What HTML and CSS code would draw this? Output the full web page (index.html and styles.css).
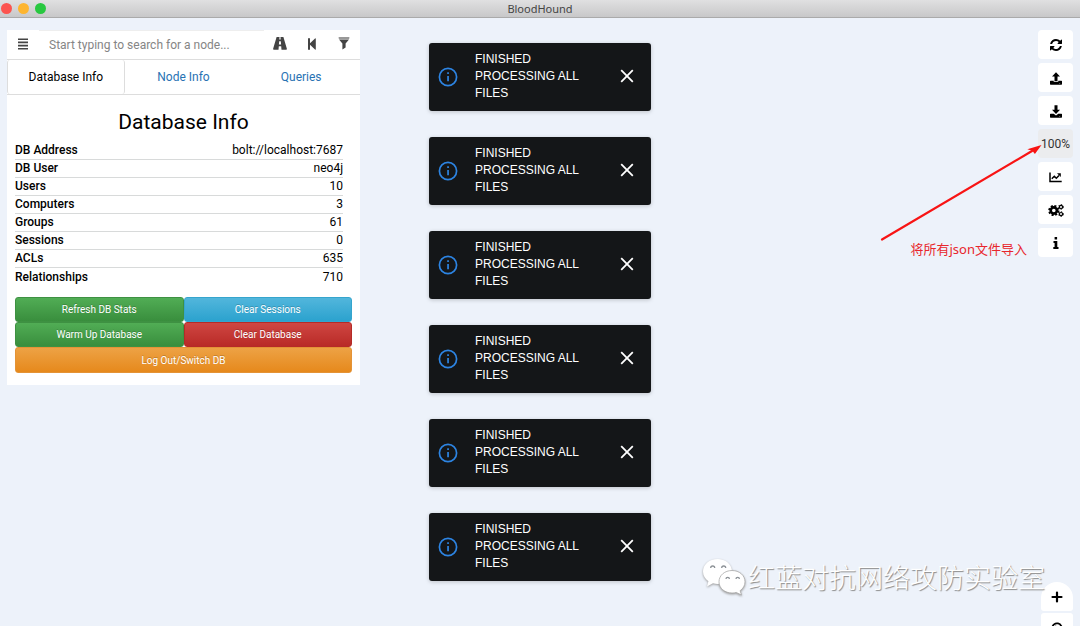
FILE: index.html
```html
<!DOCTYPE html>
<html lang="en">
<head>
<meta charset="utf-8">
<title>BloodHound</title>
<link rel="stylesheet" href="styles.css">
</head>
<body>
<header class="titlebar">
  <span class="lights"><i class="light close"></i><i class="light minimise"></i><i class="light expand"></i></span>
  <h1 class="app-name">BloodHound</h1>
</header>
<main class="workspace">
  <section class="panel">
    <form class="search">
      <button type="button" class="search-btn" aria-label="Menu"><svg width="12" height="12" viewBox="0 0 12 12"><path d="M1 1.200h10M1 4.400h10M1 7.600h10M1 10.800h10" stroke="currentColor" stroke-width="1.600"/></svg></button>
      <input class="search-input" type="text" aria-label="Search for a node" placeholder="Start typing to search for a node...">
      <button type="button" class="search-btn" aria-label="Pathfinding"><svg width="14" height="13" viewBox="0 0 14 13"><path fill="currentColor" fill-rule="evenodd" d="M3.600 0h2.900l-.2 2.500h1.400L7.500 0h2.900l3.400 11.600q.3 1.100-.6 1.100H8.500l-.3-3.400H5.800l-.3 3.400H.8q-.9 0-.6-1.100zM6.200 4.200 5.900 7.600h2.200l-.3-3.400z"/></svg></button>
      <button type="button" class="search-btn" aria-label="Back"><svg width="10" height="12" viewBox="0 0 10 12"><path fill="currentColor" d="M1 .3h2v5l5-4.800q.8-.6.8.4v10.200q0 1-.8.4L3 6.700v5H1z"/></svg></button>
      <button type="button" class="search-btn" aria-label="Filter"><svg width="12" height="13" viewBox="0 0 12 13"><path fill="currentColor" opacity=".55" d="M1 0h10q.8.500.4 1.300L11 2H1L.6 1.300Q.2.500 1 0z"/><path fill="currentColor" d="M1 2.600h10L7.600 6.500v4L4.400 12.500v-6z"/></svg></button>
    </form>
    <nav class="tabs">
      <button type="button" class="tab active">Database Info</button>
      <button type="button" class="tab">Node Info</button>
      <button type="button" class="tab">Queries</button>
    </nav>
    <div class="panel-body">
      <h2 class="panel-title">Database Info</h2>
      <table class="stats">
        <tbody>
          <tr><th scope="row">DB Address</th><td>bolt://localhost:7687</td></tr>
          <tr><th scope="row">DB User</th><td>neo4j</td></tr>
          <tr><th scope="row">Users</th><td>10</td></tr>
          <tr><th scope="row">Computers</th><td>3</td></tr>
          <tr><th scope="row">Groups</th><td>61</td></tr>
          <tr><th scope="row">Sessions</th><td>0</td></tr>
          <tr><th scope="row">ACLs</th><td>635</td></tr>
          <tr><th scope="row">Relationships</th><td>710</td></tr>
        </tbody>
      </table>
      <div class="actions">
        <button type="button" class="action green">Refresh DB Stats</button>
        <button type="button" class="action blue">Clear Sessions</button>
        <button type="button" class="action green">Warm Up Database</button>
        <button type="button" class="action red">Clear Database</button>
        <button type="button" class="action orange">Log Out/Switch DB</button>
      </div>
    </div>
  </section>

  <aside class="tools">
    <button type="button" class="tool" aria-label="Refresh"><svg width="12" height="12" viewBox="0 0 1536 1536"><path fill="currentColor" d="M1511 928q0 5-1 7-64 268-268 434.500T764 1536q-146 0-282.500-55T238 1324l-129 129q-19 19-45 19t-45-19-19-45V960q0-26 19-45t45-19h448q26 0 45 19t19 45-19 45l-137 137q71 66 161 102t187 36q134 0 250-65t186-179q11-17 53-117 8-23 30-23h192q13 0 22.500 9.500t9.500 22.500zm25-800v448q0 26-19 45t-45 19h-448q-26 0-45-19t-19-45 19-45l138-138Q979 256 768 256q-134 0-250 65T332 500q-11 17-53 117-8 23-30 23H50q-13 0-22.500-9.500T18 608v-7q65-268 270-434.500T768 0q146 0 284 55.500T1297 212l130-129q19-19 45-19t45 19 19 45z"/></svg></button>
    <button type="button" class="tool" aria-label="Upload Data"><svg width="12" height="13" viewBox="0 0 12 13"><path fill="currentColor" d="M6 .2 10 4.400H7.500V9h-3V4.400H2z"/><path fill="currentColor" fill-rule="evenodd" d="M.6 8.700h3.100v1.100h4.600V8.700h3.100q.6 0 .6.600v2.800q0 .6-.6.600H.6q-.6 0-.6-.6V9.300q0-.6.6-.6zM9.400 11v.6h.7V11z"/></svg></button>
    <button type="button" class="tool" aria-label="Import Graph"><svg width="12" height="13" viewBox="0 0 12 13"><path fill="currentColor" d="M4.500.3h3v4.500H10L6 8.900 2 4.800h2.500z"/><path fill="currentColor" fill-rule="evenodd" d="M.6 8.700h3.100L6 10.500l2.300-1.800h3.100q.6 0 .6.600v2.800q0 .6-.6.600H.6q-.6 0-.6-.6V9.300q0-.6.6-.6zM9.400 11v.6h.7V11z"/></svg></button>
    <button type="button" class="tool progress">100%</button>
    <button type="button" class="tool" aria-label="Graph layout"><svg width="13" height="11" viewBox="0 0 13 11"><path fill="none" stroke="currentColor" stroke-width="1.500" d="M1 .5v9h11.700"/><path fill="none" stroke="currentColor" stroke-width="1.500" d="m2.800 6.700 2.500-2.500 2 2L10 3.400"/><path fill="currentColor" d="M8 1.300h3.800v3.800z"/></svg></button>
    <button type="button" class="tool" aria-label="Settings"><svg width="16" height="13" viewBox="0 0 16 13"><g fill="none" stroke="currentColor"><circle cx="5.800" cy="6.500" r="3.100" stroke-width="2.600"/><circle cx="5.800" cy="6.500" r="4.700" stroke-width="1.800" stroke-dasharray="2.100 1.591"/><circle cx="13" cy="2.900" r="1.600" stroke-width="1.200"/><circle cx="13" cy="2.900" r="2.400" stroke-width=".9" stroke-dasharray="1.300 1.213"/><circle cx="13" cy="10.100" r="1.600" stroke-width="1.200"/><circle cx="13" cy="10.100" r="2.400" stroke-width=".9" stroke-dasharray="1.300 1.213"/></g></svg></button>
    <button type="button" class="tool" aria-label="About"><svg width="6" height="12" viewBox="0 0 6 12"><path fill="currentColor" d="M1.600 0h2.500v2.500H1.600zM.5 4h3.800v6H5.500v2H.3v-2h1.300V6H.5z"/></svg></button>
  </aside>
</main>

<section class="toasts" aria-label="Notifications">
  <div class="toast"><svg class="toast-icon" width="20" height="20" viewBox="0 0 20 20"><circle cx="10" cy="10" r="8.600" fill="none" stroke="currentColor" stroke-width="1.700"/><path fill="currentColor" d="M9.200 5.200h1.700v1.700H9.200zM9.200 8.900h1.700v5.300H9.200z"/></svg><p class="toast-text">FINISHED PROCESSING ALL FILES</p><button type="button" class="toast-close" aria-label="Close"><svg width="14" height="14" viewBox="0 0 14 14"><path d="m1.200 1.200 11.600 11.600m0-11.600L1.200 12.800" stroke="currentColor" stroke-width="1.800"/></svg></button></div>
  <div class="toast"><svg class="toast-icon" width="20" height="20" viewBox="0 0 20 20"><circle cx="10" cy="10" r="8.600" fill="none" stroke="currentColor" stroke-width="1.700"/><path fill="currentColor" d="M9.200 5.200h1.700v1.700H9.200zM9.200 8.900h1.700v5.300H9.200z"/></svg><p class="toast-text">FINISHED PROCESSING ALL FILES</p><button type="button" class="toast-close" aria-label="Close"><svg width="14" height="14" viewBox="0 0 14 14"><path d="m1.200 1.200 11.600 11.600m0-11.600L1.200 12.800" stroke="currentColor" stroke-width="1.800"/></svg></button></div>
  <div class="toast"><svg class="toast-icon" width="20" height="20" viewBox="0 0 20 20"><circle cx="10" cy="10" r="8.600" fill="none" stroke="currentColor" stroke-width="1.700"/><path fill="currentColor" d="M9.200 5.200h1.700v1.700H9.200zM9.200 8.900h1.700v5.300H9.200z"/></svg><p class="toast-text">FINISHED PROCESSING ALL FILES</p><button type="button" class="toast-close" aria-label="Close"><svg width="14" height="14" viewBox="0 0 14 14"><path d="m1.200 1.200 11.600 11.600m0-11.600L1.200 12.800" stroke="currentColor" stroke-width="1.800"/></svg></button></div>
  <div class="toast"><svg class="toast-icon" width="20" height="20" viewBox="0 0 20 20"><circle cx="10" cy="10" r="8.600" fill="none" stroke="currentColor" stroke-width="1.700"/><path fill="currentColor" d="M9.200 5.200h1.700v1.700H9.200zM9.200 8.900h1.700v5.300H9.200z"/></svg><p class="toast-text">FINISHED PROCESSING ALL FILES</p><button type="button" class="toast-close" aria-label="Close"><svg width="14" height="14" viewBox="0 0 14 14"><path d="m1.200 1.200 11.600 11.600m0-11.600L1.200 12.800" stroke="currentColor" stroke-width="1.800"/></svg></button></div>
  <div class="toast"><svg class="toast-icon" width="20" height="20" viewBox="0 0 20 20"><circle cx="10" cy="10" r="8.600" fill="none" stroke="currentColor" stroke-width="1.700"/><path fill="currentColor" d="M9.200 5.200h1.700v1.700H9.200zM9.200 8.900h1.700v5.300H9.200z"/></svg><p class="toast-text">FINISHED PROCESSING ALL FILES</p><button type="button" class="toast-close" aria-label="Close"><svg width="14" height="14" viewBox="0 0 14 14"><path d="m1.200 1.200 11.600 11.600m0-11.600L1.200 12.800" stroke="currentColor" stroke-width="1.800"/></svg></button></div>
  <div class="toast"><svg class="toast-icon" width="20" height="20" viewBox="0 0 20 20"><circle cx="10" cy="10" r="8.600" fill="none" stroke="currentColor" stroke-width="1.700"/><path fill="currentColor" d="M9.200 5.200h1.700v1.700H9.200zM9.200 8.900h1.700v5.300H9.200z"/></svg><p class="toast-text">FINISHED PROCESSING ALL FILES</p><button type="button" class="toast-close" aria-label="Close"><svg width="14" height="14" viewBox="0 0 14 14"><path d="m1.200 1.200 11.600 11.600m0-11.600L1.200 12.800" stroke="currentColor" stroke-width="1.800"/></svg></button></div>
</section>

<div class="zoom">
  <button type="button" class="zoom-btn first" aria-label="Zoom in"><svg width="12" height="12" viewBox="0 0 12 12"><path d="M6 1.500v9M1.500 6h9" stroke="currentColor" stroke-width="2.200" stroke-linecap="round"/></svg></button>
  <button type="button" class="zoom-btn" aria-label="Reset zoom"><svg width="12" height="12" viewBox="0 0 12 12"><path d="M1.300 6a4.700 4.700 0 1 1 2 3.900" fill="none" stroke="currentColor" stroke-width="1.800"/><path fill="currentColor" d="M4 3.400 8.500 5 6 7.500z"/></svg></button>
</div>

<svg class="arrow" width="164" height="100" viewBox="0 0 164 100" aria-hidden="true"><path d="M4 96.500 154 8" stroke="#f81414" stroke-width="2.200" stroke-linecap="round"/><path fill="#f81414" d="m163.500 2-6.600 9-2.600-3.200-5-1.600z"/></svg>
<p class="note">将所有json文件导入</p>
<div class="watermark">
  <svg width="44" height="38" viewBox="0 0 44 38" aria-hidden="true"><g fill="#fff"><path d="M15.500 1C7.500 1 1 6.400 1 13.500c0 4.100 2.100 7.400 5.400 9.700L5 28.500l6-3.200c1.500.4 3 .6 4.500.6C23.500 25.900 30 20.600 30 13.500S23.500 1 15.500 1z"/><path stroke="#aaa" stroke-width=".8" d="M30 12.500c-7.200 0-13 4.800-13 11.300S22.800 35 30 35c1.500 0 2.900-.2 4.200-.6l5.300 2.600-1.400-4.300c3-2.100 4.900-5.200 4.900-8.900 0-6.500-5.800-11.300-13-11.300z"/></g><path fill="none" stroke="#8d9297" stroke-width="1.300" d="M8.700 10a2 2 0 0 1 4 0M19.700 10a2 2 0 0 1 4 0M24 21a1.700 1.700 0 0 1 3.400 0M34 21a1.700 1.700 0 0 1 3.400 0"/></svg>
  <span>红蓝对抗网络攻防实验室</span>
</div>
</body>
</html>
```
FILE: styles.css
```css
* { box-sizing: border-box; }

body {
  position: relative;
  min-height: 100vh;
  margin: 0;
  overflow: hidden;
  background: #edf2fa;
  color: #111;
  font-family: Roboto, "Liberation Sans", sans-serif;
  font-size: 12px;
}

button {
  display: flex;
  align-items: center;
  justify-content: center;
  margin: 0;
  padding: 0;
  border: 0;
  background: none;
  color: inherit;
  font: inherit;
}

.titlebar {
  display: grid;
  grid-template-columns: 1fr auto 1fr;
  align-items: center;
  height: 18px;
  border-bottom: 1px solid #aaa;
  background: linear-gradient(#e0e0e1, #c8c8c9);
}
.lights { display: flex; gap: 6px; padding-left: 1px; }
.light { width: 11px; height: 11px; border-radius: 50%; }
.close { background: #fc544f; }
.minimise { background: #fdb52f; }
.expand { background: #28c840; }
.app-name { margin: 0; padding-top: 1px; color: #444; font-family: "Noto Sans", sans-serif; font-size: 11px; font-weight: 400; line-height: 16px; }

.workspace {
  display: flex;
  justify-content: space-between;
  align-items: flex-start;
  padding: 12px 7px 0;
}

.panel { width: 353px; background: #fff; }
.search { display: flex; height: 29px; color: #444; }
.search-btn { flex: 0 0 32px; padding-bottom: 2px; }
.search-input {
  flex: 1;
  min-width: 0;
  padding: 0 10px 1px;
  border: 0;
  border-top: 1px solid #eee;
  background: #fff;
  font: inherit;
}
.search-input::placeholder { color: #858585; opacity: 1; }

.tabs { display: grid; grid-template-columns: repeat(3, 1fr); border-top: 1px solid #ddd; border-bottom: 1px solid #ddd; }
.tab { height: 34px; color: #2872b3; }
.active { border: 1px solid #ddd; border-width: 0 1px; border-radius: 3px; color: #000; }

.panel-body { padding: 13px 8px 12px; }
.panel-title { margin: 0 0 6px; color: #000; font-size: 21px; font-weight: 400; line-height: 28px; text-align: center; }

.stats { width: calc(100% - 9px); border-spacing: 0; color: #000; }
.stats th, .stats td { height: 18px; padding: 0; border-bottom: 1px solid #d8dada; line-height: 17px; }
.stats th { font-weight: 500; text-align: left; }
.stats td { text-align: right; }
.stats tr:last-child > * { border-bottom: 0; }

.actions { display: grid; grid-template-columns: 1fr 1fr; margin-top: 11px; }
.action {
  height: 25px;
  border: 1px solid;
  border-radius: 3px;
  color: #fff;
  font-size: 10px;
  text-shadow: 0 -1px 0 rgba(0, 0, 0, .2);
}
.green { border-color: #3e9142; background: linear-gradient(#51ad55, #398e3d); }
.blue { border-color: #35a5cd; background: linear-gradient(#52b6dc, #2ba2ce); }
.red { border-color: #b52b27; background: linear-gradient(#cf4642, #b92b27); }
.orange { grid-column: 1 / -1; height: 26px; border-color: #e49336; background: linear-gradient(#eda245, #e6891c); }

.tools { display: flex; flex-direction: column; gap: 4px; width: 35px; }
.tool { height: 29px; padding-top: 1px; border-radius: 4px; background: #fff; color: #000; }
.progress { background: #ebecee; color: #333; }

.toasts {
  position: absolute;
  top: 43px;
  left: 0;
  right: 0;
  display: flex;
  flex-direction: column;
  align-items: center;
  gap: 26px;
  pointer-events: none;
}
.toast {
  display: flex;
  align-items: center;
  width: 222px;
  padding: 8px 16px 9px 9px;
  border-radius: 3px;
  background: #141618;
  color: #fff;
  box-shadow: 0 1px 4px rgba(0, 0, 0, .2);
  font-family: "Liberation Sans", Arial, sans-serif;
  pointer-events: auto;
}
.toast-icon { flex: none; margin-right: 17px; color: #2d84e2; }
.toast-text { flex: 1; margin: 0; padding-right: 36px; line-height: 17px; }
.toast-close { flex: none; width: 16px; height: 20px; padding-bottom: 2px; }

.zoom { position: absolute; top: 582px; right: 7px; display: flex; flex-direction: column; gap: 2px; width: 32px; }
.zoom-btn { height: 29px; border-radius: 3px; background: #fff; color: #000; }
.first { border-radius: 16px 16px 3px 3px; }

.arrow { position: absolute; top: 143px; right: 38px; }
.note {
  position: absolute;
  top: 239px;
  right: 53px;
  margin: 0;
  color: #e8262c;
  font-family: "Noto Sans", "Noto Sans CJK SC", sans-serif;
  font-size: 13px;
  line-height: 20px;
}
.watermark {
  position: absolute;
  top: 558px;
  right: 35px;
  display: flex;
  align-items: center;
  gap: 2px;
  color: #fff;
  font-family: "Noto Sans CJK SC", sans-serif;
  font-size: 27px;
  font-weight: 300;
  line-height: 38px;
  text-shadow: 1px 1px 1px #888;
  pointer-events: none;
}
.watermark svg { filter: drop-shadow(0 1px 1px #999); }
```
